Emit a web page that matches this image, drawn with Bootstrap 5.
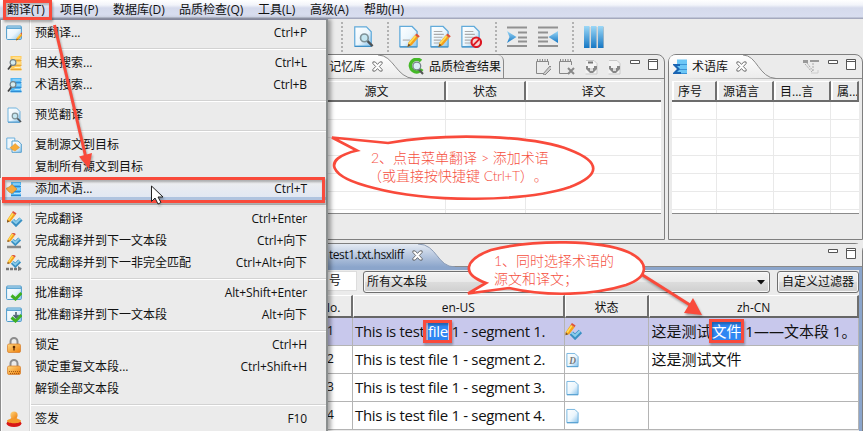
<!DOCTYPE html>
<html lang="zh-CN">
<head>
<meta charset="utf-8">
<title>翻译</title>
<link href="https://cdn.jsdelivr.net/npm/bootstrap@5.3.0/dist/css/bootstrap.min.css" rel="stylesheet">
<style>
body{width:863px;height:431px;overflow:hidden;background:#ebebeb;color:#111;font:12px/1 "Open Sans","Noto Sans CJK SC",sans-serif;white-space:nowrap}
svg{display:block;flex:none}
.app{width:863px;height:431px;overflow:hidden}
.menubar{height:19px;padding-left:7px;background:linear-gradient(#fff 0,#f2f4fa 5px,#d5daec 8px,#d8deef 17px,#a4a9bd 18px);line-height:19px}
.w52{width:52px}.w53{width:53px}.w54{width:54px}.w66{width:66px}.w79{width:79px}
.g4{margin-left:4px}.g6{margin-left:6px}.g7{margin-left:7px}.g8{margin-left:8px}.g9{margin-left:9px}.g10{margin-left:10px}.g11{margin-left:11px}.g13{margin-left:13px}.g14{margin-left:14px}.g27{margin-left:27px}.g32{margin-left:31px}
.up{margin-top:-5px}
.toolbar{height:35px;padding-left:341px}
.dots{width:2px;height:30px;background:repeating-linear-gradient(#b2b2b2 0 2px,transparent 2px 4px)}
.panes{height:189px}
.pane{border:1px solid #7f7f7f;border-radius:0 8px 0 0;height:186px;background:#ebebeb}
.pane-l{width:665px}
.pane-r{width:195px;margin-left:-1px;border-radius:8px 8px 0 0}
.tabs{height:24px;border-bottom:1px solid #8a8a8a}
.tab-b{width:96px;margin-left:-6px;height:23px;border-right:1px solid #8a8a8a;border-radius:0 6px 0 0}
.term-icon{margin:0 4px 0 3px}
.vt{height:133px;border-bottom:1px solid #8a8a8a;margin:2px 3px 0 3px;background:#fff}
.hd{height:21px;border-right:2px solid #707070;border-bottom:2px solid #6c6c6c;border-top:1px solid #fff;background:linear-gradient(90deg,#fff 2px,#ebebeb 2px);line-height:20px;text-align:center}
.hd.s{text-align:left;padding-left:6px}
.a1{width:442px}.hd.a1{padding-left:305px}.a2{width:80px}
.b1{width:45px}.b2{width:57px}.b4{width:28px}
.bodygrid{height:111px;background:repeating-linear-gradient(#fff 0 17px,#e9e9e9 17px 18px)}
.bodygrid>div{border-right:1px solid #e9e9e9;height:111px}
.editor{height:190px;border:1px solid #7f7f7f;border-radius:0 8px 0 0}
.etabs{height:23px;border-bottom:1px solid #8a8a8a;background:#ebebeb}
.etab-name{left:328px;letter-spacing:-.45px}
.etab-x{left:411px}
.emm{margin-right:6px;margin-top:-3px}
.ebody{border-right:3px solid #8ba5cb;border-top:3px solid #8ba5cb;height:170px;background:#ebebeb}
.filters{height:25px;padding:1px 0 0 307px}
.fi{width:49px;height:20px;background:#fff;border:1px solid #ddd;line-height:18px;padding-left:20px;font-size:12px}
.fb{height:22px;border:1px solid #6f6f6f;border-radius:3px;background:linear-gradient(#f3f3f3,#e9e9e9 48%,#dcdcdc 52%,#cfcfcf);box-shadow:inset 0 0 0 1px #f8f8f8;line-height:20px}
.f-all{width:407px;margin-left:6px;padding-left:3px}
.f-own{width:82px;margin-left:7px}
.segs{padding-left:319px}
.eh{height:23px;border-right:2px solid #6f6f6f;border-bottom:2px solid #666;border-top:1px solid #fff;border-left:1px solid #fff;line-height:23px;text-align:center;background:#ececec}
.er{height:28px;background:#fff;border-bottom:1px solid #b4b4b4}
.er.on{background:#c8c8ec}
.er>div{border-right:1px solid #b4b4b4;height:27px;line-height:26px;font-size:15px}
.er>.c0{font-size:12px;padding-left:7px}
.er>.c1{padding-left:2px;letter-spacing:-.32px}
.er>.c3{padding-left:2px}
.eh.c0{text-align:right;padding-right:11px}
.c0{width:33px}.c1{width:212px}.c2{width:85px}.c3{width:210px}
.sel{background:#2f86f2;color:#fff;padding:1px 0}
/* open drop-down menu over the workspace */
.dmenu{left:0;top:19px;width:328px;height:412px;background:linear-gradient(90deg,#8d8d8d 1px,#fbfbfb 1px 2px,#ebebeb 2px 29px,#d7d7d7 29px 30px,#fff 30px 31px,#ebebeb 31px);border-right:2px solid #8a8e8e;border-top:1px solid #85889b;padding-top:2px;box-shadow:3px 0 4px rgba(0,0,0,.35)}
.mi{height:22px;padding:0 19px 0 6px;line-height:22px}
.mi svg{margin-right:12px}
.mi .ms-auto{letter-spacing:-.1px}
.mi.hot{background:linear-gradient(#efefef,#dfe6f3);box-shadow:inset 0 -3px #afc3df}
.ms{height:8px;margin:0 0 0 31px;background:linear-gradient(transparent 4px,#d2d2d2 4px 5px,#fff 5px 6px,transparent 6px)}
.note{color:#f5503f;font:300 14px/18px "Lato","Noto Sans CJK SC",sans-serif;text-spacing-trim:space-all}
.n1{left:494px;top:252px}.n2{left:371px;top:149px}
.n2 .second{margin-left:-3px}
.n2 .keys{letter-spacing:-.4px}
.over{filter:drop-shadow(1px 2px 1px rgba(0,0,0,.3))}
</style>
<script src="https://cdn.jsdelivr.net/npm/bootstrap@5.3.0/dist/js/bootstrap.bundle.min.js"></script>
</head>
<body>
<svg width="0" height="0" class="position-absolute">
<defs>
<linearGradient id="gp" x1="0" y1="0" x2="1" y2="1"><stop offset="0" stop-color="#fff"/><stop offset=".55" stop-color="#eaf5fc"/><stop offset="1" stop-color="#86c2ec"/></linearGradient>
<linearGradient id="gb" x1="0" y1="0" x2="0" y2="1"><stop offset="0" stop-color="#9cd8f7"/><stop offset="1" stop-color="#1577c4"/></linearGradient>
<linearGradient id="go" x1="0" y1="0" x2="1" y2="1"><stop offset="0" stop-color="#ffd982"/><stop offset="1" stop-color="#ee7d08"/></linearGradient>
<linearGradient id="gt" x1="0" y1="0" x2="0" y2="1"><stop offset="0" stop-color="#fff"/><stop offset="1" stop-color="#ebebeb"/></linearGradient>
<linearGradient id="ge" x1="0" y1="0" x2="0" y2="1"><stop offset="0" stop-color="#e4eaf3"/><stop offset="1" stop-color="#8ba5cb"/></linearGradient>
</defs>
<symbol id="page" viewBox="0 0 16 16"><path d="M2 1h8.500l3.500 3.500V15h-12z" fill="url(#gp)" stroke="#62abda" stroke-width=".9"/><path d="M2 15.300h12" stroke="#3f8fc6" stroke-width=".8"/></symbol>
<symbol id="lens" viewBox="0 0 16 16"><path d="M10 10l4 4" stroke="#4d5357" stroke-width="1.700"/><circle cx="8" cy="8" r="2.800" fill="#c4e6f1" stroke="#7f9298" stroke-width="1.200"/></symbol>
<symbol id="pencil" viewBox="0 0 16 16"><path d="M5 15l1-4 6-7 3 2.500-6 7z" fill="#f6a11c"/><path d="M6.500 12l6-7" stroke="#ffdf57" stroke-width="1.500"/><path d="M12 4l1.500-1.500 3 2.500L15 6.500z" fill="#de5339"/><path d="M5 15l1-3 2 1.500z" fill="#6d4c2f"/></symbol>
<symbol id="doclens" viewBox="0 0 16 16"><use href="#page"/><use href="#lens" x="1" y="1"/></symbol>
<symbol id="docpen" viewBox="0 0 16 16"><use href="#page"/><path d="M4 10.500h5" stroke="#bbb"/><use href="#pencil" x="3" y="4" width="13" height="12"/></symbol>
<symbol id="docpen2" viewBox="0 0 16 16"><use href="#page"/><path d="M4 4.500h6M4 6.500h7M4 8.500h6M4 10.500h5M4 12.500h4" stroke="#aaa" stroke-width=".8"/><use href="#pencil" x="3" y="4" width="13" height="12"/></symbol>
<symbol id="docno" viewBox="0 0 16 16"><use href="#page"/><path d="M4 4.500h6M4 6.500h7M4 8.500h6M4 10.500h5M4 12.500h4" stroke="#aaa" stroke-width=".8"/><circle cx="12" cy="12" r="3.300" fill="#f6d5d5" stroke="#dc1722" stroke-width="1.500"/><path d="M9.800 14.200l4.500-4.500" stroke="#dc1722" stroke-width="1.300"/></symbol>
<symbol id="win" viewBox="0 0 16 16"><rect x=".6" y="1" width="14.800" height="13.500" rx="1" fill="url(#gp)" stroke="#4f9bca"/><path d="M1 2.500h14" stroke="#62a8d4" stroke-width="3"/><path d="M1.500 2h13" stroke="#b6dbef"/></symbol>
<symbol id="winpen" viewBox="0 0 16 16"><use href="#win"/><use href="#pencil" x="7" y="6" width="10" height="10"/></symbol>
<symbol id="winok" viewBox="0 0 16 16"><use href="#win"/><path d="M5.500 10.500l4 3.500L15.500 8" fill="none" stroke="#3fb022" stroke-width="3"/></symbol>
<symbol id="winok2" viewBox="0 0 16 16"><use href="#winok"/><path d="M10 5v5M7.500 8l2.500 2.500L12.500 8" fill="none" stroke="#4f6170" stroke-width="1.600"/></symbol>
<symbol id="dby" viewBox="0 0 16 16"><path d="M4 1h11v3l-1 1 1 2v3l-1 1 1 3v1.500H4z" fill="#ffcc5c"/><path d="M5 5.500h10M5 10.500h10M4 14.500h11" stroke="#e5a43a" stroke-width=".9"/><path d="M6 3h8M8 8h6M8 12.500h6" stroke="#fff0bd"/><path d="M5 10l-3.500 4.500" stroke="#444" stroke-width="1.800"/><circle cx="6.500" cy="7.500" r="2.900" fill="#d5ebee" stroke="#74838a" stroke-width="1.200"/></symbol>
<symbol id="dbb" viewBox="0 0 16 16"><path d="M4 1h11v3l-1 1 1 2v3l-1 1 1 3v1.500H4z" fill="#52b7f3"/><path d="M5 5.500h10M5 10.500h10M4 14.500h11" stroke="#2c86cf" stroke-width=".9"/><path d="M6 3h8M8 8h6M8 12.500h6" stroke="#b4e4ff"/><path d="M5 10l-3.500 4.500" stroke="#444" stroke-width="1.800"/><circle cx="6.500" cy="7.500" r="2.900" fill="#d5ebee" stroke="#74838a" stroke-width="1.200"/></symbol>
<symbol id="copy" viewBox="0 0 16 16"><path d="M.8 1h8v11h-8z" fill="#eef7fd" stroke="#6cb0dc"/><path d="M6 4h6l3.300 3v8.300H6z" fill="url(#gp)" stroke="#559fce"/><path d="M4 10.500L6.500 9 9 6.500l4.500 4L9 14l-3-1.500z" fill="#f8ac38" stroke="#d68d2c" stroke-width=".5"/></symbol>
<symbol id="dbadd" viewBox="0 0 16 16"><path d="M5 1h10v3l-1 1 1 2v3l-1 1 1 3v1.500H5z" fill="#52b7f3"/><path d="M5 5.500h10M5 10.500h10M5 14.500h10" stroke="#2c86cf"/><path d="M7 3h7M9 8h5M8 12.500h6" stroke="#b4e4ff"/><path d="M0 7.500L3 6l3-2.500L11 8l-5 4.500L3 11z" fill="#f8a83b" stroke="#c98026" stroke-width=".6"/></symbol>
<symbol id="done" viewBox="0 0 16 16"><path d="M6 9.500l3.500 3.500L14.500 8" fill="none" stroke="#3990c3" stroke-width="4.500"/><path d="M6 9l3.500 3L14 7.500" fill="none" stroke="#8accea" stroke-width="2"/><path d="M.5 9L5.500 1.500l3.500 2.500L4 10.500l-3.500 1z" fill="#f6a11c"/><path d="M2 9l4.500-6.500" stroke="#ffdf57" stroke-width="1.500"/><path d="M5.500 1.500l1-1.500L10 2.300 9 4z" fill="#de5339"/><path d="M.5 11.500L.8 9l2.200 1.500z" fill="#6e5136"/></symbol>
<symbol id="done2" viewBox="0 0 16 16"><path d="M1 14h14" stroke="#888" stroke-width="2.500"/><use href="#done" y="-1" height="14"/></symbol>
<symbol id="done3" viewBox="0 0 16 16"><path d="M0 14h15" stroke="#777" stroke-width="2.500" stroke-dasharray="3 1"/><path d="M12 11l4 2.800-4 2.200z" fill="#777"/><use href="#done" y="-1" height="14"/></symbol>
<symbol id="lock" viewBox="0 0 16 16"><path d="M4.500 8V4.500a3.500 3.500 0 0 1 7 0V8" fill="none" stroke="#8d8d8d" stroke-width="2"/><rect x="1.500" y="7" width="13" height="8.500" rx="1.500" fill="url(#go)" stroke="#d67b28" stroke-width=".7"/><circle cx="8" cy="10" r="1.300" fill="#5b2900"/><path d="M8 9.500v4" stroke="#5b2900" stroke-width="1.300"/></symbol>
<symbol id="lock2" viewBox="0 0 16 16"><path d="M4.500 8V4.500a3.500 3.500 0 0 1 7 0V8" fill="none" stroke="#8d8d8d" stroke-width="2"/><rect x="1.500" y="7" width="13" height="8.500" rx="1.500" fill="url(#go)" stroke="#d67b28" stroke-width=".7"/><path d="M3 12.500h11M4 14.500h10" stroke="#a65a13" stroke-dasharray="1 1"/></symbol>
<symbol id="stamp" viewBox="0 0 16 16"><ellipse cx="8" cy="12.500" rx="7.500" ry="3.500" fill="#d81817"/><path d="M1 10c0-2 5-1.500 4.500-4h5C10 8.500 15 8 15 10c0 3-14 3-14 0" fill="#f4992b"/><circle cx="8" cy="4" r="3.600" fill="url(#go)"/></symbol>
<symbol id="indent" viewBox="0 0 20 21"><path d="M0 1.500h20M11 6.500h9M11 11.500h9M11 15.500h9M0 20h20" stroke="#919191" stroke-width="2"/><path d="M0 5l9.500 6L0 17l2.500-6z" fill="url(#gb)"/></symbol>
<symbol id="outdent" viewBox="0 0 20 21"><path d="M0 1.500h20M0 6.500h10M0 11.500h10M0 15.500h10M0 20h20" stroke="#919191" stroke-width="2"/><path d="M20 5l-9.500 6L20 17z" fill="url(#gb)"/></symbol>
<symbol id="cross" viewBox="0 0 12 12"><path d="M1 1h2.500L6 3.700 8.500 1H11v1.800L8 6l3 3.200V11H8.500L6 8.300 3.500 11H1V9.200L4 6 1 2.800z" fill="#fff" stroke="#555" stroke-width=".9"/></symbol>
<symbol id="note" viewBox="0 0 16 16"><path d="M10 14.500H1.500v-12h12V6" fill="none" stroke="#888"/><path d="M2 1.500h11.500" stroke="#888" stroke-width="3" stroke-dasharray="1 1.500"/></symbol>
<symbol id="gdoc" viewBox="0 0 16 16"><path d="M3 1.500h8l3 3V15H2.500" fill="#f4f4f4" stroke="#c9c9c9"/><path d="M3 7h2v2h6V7h3v3l-4 4H7l-4-4z" fill="#888"/><path d="M7 9h3v3H7z" fill="#ddd"/></symbol>
<symbol id="minmax" viewBox="0 0 28 11"><path d="M.5 1.500h9v3h-9z" fill="#fff" stroke="#555"/><path d="M18.500.5h9v10h-9zM18.500 2.500h9" fill="#fff" stroke="#555"/></symbol>
</svg>

<div class="app position-relative">
<nav class="menubar d-flex">
<span class="w53">翻译(T)</span><span class="w53">项目(P)</span><span class="w66">数据库(D)</span><span class="w79">品质检查(Q)</span><span class="w52">工具(L)</span><span class="w54">高级(A)</span><span>帮助(H)</span>
</nav>
<div class="toolbar d-flex align-items-center">
<span class="dots"></span>
<svg class="g9" width="22" height="23"><use href="#doclens"/></svg>
<span class="dots g13"></span>
<svg class="g8" width="23" height="23"><use href="#docpen"/></svg>
<svg class="g8" width="23" height="23"><use href="#docpen2"/></svg>
<svg class="g8" width="23" height="23"><use href="#docno"/></svg>
<span class="dots g13"></span>
<svg class="g10" width="20" height="21"><use href="#indent"/></svg>
<svg class="g11" width="20" height="21"><use href="#outdent"/></svg>
<span class="dots g14"></span>
<svg class="g10" width="20" height="22"><path d="M0 0h5.500v22H0zM7 0h5.500v22H7zM14 0h5.500v22H14z" fill="url(#gb)"/><path d="M6 1v21M13 1v21M19.700 1v21" stroke="#777" opacity=".3"/></svg>
</div>
<div class="panes d-flex gap-1">
<section class="pane pane-l">
<div class="tabs d-flex align-items-center">
<svg width="327" height="23"><path d="M0 0h327v23H0z" fill="url(#gt)"/></svg>
<div class="position-relative d-flex align-items-center"><svg width="86" height="24"><path d="M0 0H50C66 0 68 23 86 23.500H0z" fill="url(#gt)"/><path d="M50 0C66 0 68 23 86 23.500" fill="none" stroke="#8a8a8a"/></svg><span class="position-absolute start-0 d-flex align-items-center">&#8202;记忆库<svg class="g7" width="11" height="11"><use href="#cross"/></svg></span></div>
<div class="tab-b d-flex align-items-center"><svg width="17" height="17" viewBox="0 0 17 17"><path d="M13 3a6.300 6.300 0 1 0 1 8" fill="none" stroke="#45b928" stroke-width="3.500"/><path d="M10.500 11l4.500 5" stroke="#555" stroke-width="2"/><circle cx="8.800" cy="8" r="3.900" fill="#d9edf5" stroke="#75838a" stroke-width="1.300"/></svg><span class="ps-1">品质检查结果</span></div>
<svg class="g32" width="16" height="16"><use href="#note"/><path d="M8 15l7-8 2 2-7 7z" fill="#ccc" stroke="#888"/></svg>
<svg class="g7" width="17" height="16"><use href="#note" width="16"/><path d="M10 9l6 6M16 9l-6 6" stroke="#888" stroke-width="2"/></svg>
<svg class="g8" width="16" height="16"><use href="#gdoc"/><path d="M5 3.500h5" stroke="#777" stroke-width="2"/></svg>
<svg class="g7" width="16" height="16"><use href="#gdoc"/></svg>
<svg class="g8 up" width="28" height="11"><use href="#minmax"/></svg>
</div>
<div class="vt">
<div class="d-flex"><div class="hd a1">源文</div><div class="hd a2">状态</div><div class="hd flex-fill border-end-0">译文</div></div>
<div class="bodygrid d-flex"><div class="a1"></div><div class="a2"></div></div>
</div>
</section>
<section class="pane pane-r">
<div class="tabs d-flex align-items-center">
<div class="position-relative d-flex align-items-center"><svg width="107" height="24"><path d="M0 24V7Q0 0 7 0H74C88 0 90 23 107 23.500z" fill="url(#gt)"/><path d="M74 0C88 0 90 23 107 23.500" fill="none" stroke="#8a8a8a"/></svg><span class="position-absolute start-0 d-flex align-items-center"><svg class="term-icon" width="16" height="16" viewBox="0 0 16 16"><path d="M5 .5h10v14.500H5z" fill="#6cc6f6"/><path d="M6 5.500h9M6 10.500h9M5 14.500h10" stroke="#3c94d6"/><path d="M8 5H1v1l4 4-4 4v1h8v-2H5l3-3-3-3h3z" fill="#1a64b2"/></svg>术语库<svg class="g8" width="11" height="11"><use href="#cross"/></svg></span></div>
<svg class="g27" width="17" height="15"><path d="M0 1h5v3H0zM7 1h9v2H7z" fill="#999"/><path d="M2 5l7 8M4 4l6 8M10 4v8" stroke="#aaa" stroke-dasharray="2 1"/><path d="M8 14h7v-3" fill="none" stroke="#ccc"/></svg>
<svg class="g8 up" width="28" height="11"><use href="#minmax"/></svg>
</div>
<div class="vt">
<div class="d-flex"><div class="hd s b1">序号</div><div class="hd s b2">源语言</div><div class="hd s b2">目...言</div><div class="hd s b4 flex-fill overflow-hidden">属...</div></div>
<div class="bodygrid d-flex"><div class="b1"></div><div class="b2"></div><div class="b2"></div></div>
</div>
</section>
</div>
<section class="editor">
<div class="etabs d-flex align-items-center">
<div class="position-relative d-flex align-items-center"><svg width="454" height="23"><path d="M0 0H417C436 0 436 23 454 23H0z" fill="url(#ge)"/><path d="M417 0C436 0 436 23 454 23" fill="none" stroke="#8a9bb5"/></svg><span class="etab-name position-absolute">test1.txt.hsxliff</span><svg class="etab-x position-absolute" width="11" height="11"><use href="#cross"/></svg></div>
<svg width="28" height="11" class="emm ms-auto"><use href="#minmax"/></svg>
</div>
<div class="ebody">
<div class="filters d-flex"><div class="fi">号</div><div class="fb f-all d-flex align-items-center">所有文本段<svg class="ms-auto me-1" width="8" height="5"><path d="M0 0h8L4 4.500z" fill="#111"/></svg></div><div class="fb f-own text-center">自定义过滤器</div></div>
<div class="segs">
<div class="d-flex"><div class="eh c0">No.</div><div class="eh c1">en-US</div><div class="eh c2">状态</div><div class="eh c3">zh-CN</div></div>
<div class="er on d-flex"><div class="c0">1</div><div class="c1">This is test <span class="sel">file</span> 1 - segment 1.</div><div class="c2 d-flex align-items-center"><svg width="17" height="17"><use href="#done"/></svg></div><div class="c3">这是测试<span class="sel">文件</span> 1——文本段 1。</div></div>
<div class="er d-flex"><div class="c0">2</div><div class="c1">This is test file 1 - segment 2.</div><div class="c2 d-flex align-items-center"><svg width="15" height="16" viewBox="0 0 16 16"><use href="#page"/><text x="4.500" y="12" font-family="Liberation Serif" font-style="italic" font-weight="bold" font-size="10" fill="#777">D</text></svg></div><div class="c3">这是测试文件</div></div>
<div class="er d-flex"><div class="c0">3</div><div class="c1">This is test file 1 - segment 3.</div><div class="c2 d-flex align-items-center"><svg width="15" height="16"><use href="#page"/></svg></div><div class="c3"></div></div>
<div class="er d-flex"><div class="c0">4</div><div class="c1">This is test file 1 - segment 4.</div><div class="c2 d-flex align-items-center"><svg width="15" height="16"><use href="#page"/></svg></div><div class="c3"></div></div>
</div>
</div>
</section>

<div class="dmenu position-absolute">
<div class="mi d-flex align-items-center"><svg width="17" height="16"><use href="#winpen" width="16"/></svg>预翻译...<span class="ms-auto">Ctrl+P</span></div>
<div class="ms"></div>
<div class="mi d-flex align-items-center"><svg width="17" height="16"><use href="#dby"/></svg>相关搜索...<span class="ms-auto">Ctrl+L</span></div>
<div class="mi d-flex align-items-center"><svg width="17" height="16"><use href="#dbb"/></svg>术语搜索...<span class="ms-auto">Ctrl+B</span></div>
<div class="ms"></div>
<div class="mi d-flex align-items-center"><svg width="17" height="16"><use href="#doclens" width="16"/></svg>预览翻译</div>
<div class="ms"></div>
<div class="mi d-flex align-items-center"><svg width="17" height="16"><use href="#copy" width="16"/></svg>复制源文到目标</div>
<div class="mi d-flex align-items-center"><svg width="17" height="16"></svg>复制所有源文到目标</div>
<div class="mi hot d-flex align-items-center"><svg width="17" height="16"><use href="#dbadd" width="16"/></svg>添加术语...<span class="ms-auto">Ctrl+T</span></div>
<div class="ms"></div>
<div class="mi d-flex align-items-center"><svg width="17" height="16"><use href="#done"/></svg>完成翻译<span class="ms-auto">Ctrl+Enter</span></div>
<div class="mi d-flex align-items-center"><svg width="17" height="16"><use href="#done2" width="16"/></svg>完成翻译并到下一文本段<span class="ms-auto">Ctrl+向下</span></div>
<div class="mi d-flex align-items-center"><svg width="17" height="16"><use href="#done3" width="16"/></svg>完成翻译并到下一非完全匹配<span class="ms-auto">Ctrl+Alt+向下</span></div>
<div class="ms"></div>
<div class="mi d-flex align-items-center"><svg width="17" height="16"><use href="#winok" width="16"/></svg>批准翻译<span class="ms-auto">Alt+Shift+Enter</span></div>
<div class="mi d-flex align-items-center"><svg width="17" height="16"><use href="#winok2" width="16"/></svg>批准翻译并到下一文本段<span class="ms-auto">Alt+向下</span></div>
<div class="ms"></div>
<div class="mi d-flex align-items-center"><svg width="17" height="16"><use href="#lock" width="16"/></svg>锁定<span class="ms-auto">Ctrl+H</span></div>
<div class="mi d-flex align-items-center"><svg width="17" height="16"><use href="#lock2" width="16"/></svg>锁定重复文本段...<span class="ms-auto">Ctrl+Shift+H</span></div>
<div class="mi d-flex align-items-center"><svg width="17" height="16"></svg>解锁全部文本段</div>
<div class="ms"></div>
<div class="mi d-flex align-items-center"><svg width="17" height="16"><use href="#stamp" width="16"/></svg>签发<span class="ms-auto">F10</span></div>
</div>

<!-- callouts, frames and arrows drawn over the window -->
<svg class="over position-absolute top-0 start-0" width="863" height="431">
<g fill="none" stroke="#f94a3b" stroke-width="3">
<path d="M4.500 1.500h46v17h-46zM3.500 178.500h320v23h-320z"/>
<path d="M424.500 321.500h26v20h-26zM710.500 320.500h32v21h-32z"/>
<path d="M54.500 25L86 158"/>
<path d="M641 274L690 305"/>
</g>
<path d="M89 169L79 156.500 92 153zM702 315L684 313 693 298z" fill="#f94a3b"/>
<path d="M151.500 186v15.500l3.500-3.500 3 6 3-1.500-3-5.500h5z" fill="#fff" stroke="#222"/>
</svg>
<svg class="position-absolute top-0 start-0" width="863" height="431">
<g fill="#fff" stroke="#f94a3b" stroke-width="2.700">
<path d="M332 137.500L388 143C452 132 534 136 570 150C601 162 601 175 570 187C525 202 430 203 374 188C328 177 321 159 357 150.500z"/>
<path d="M468 293.500L486 283C461 274 464 260 491 250C535 239 600 240 628 252C650 262 649 277 626 285C594 295 548 297 509 288z"/>
</g>
</svg>
<div class="note n1 position-absolute"><div>1、同时选择术语的</div><div>源文和译文；</div></div>
<div class="note n2 position-absolute"><div>2、点击菜单翻译 &gt; 添加术语</div><div class="second">（或直接按快捷键 <span class="keys">Ctrl+T</span>）。</div></div>
</div>
</body>
</html>
